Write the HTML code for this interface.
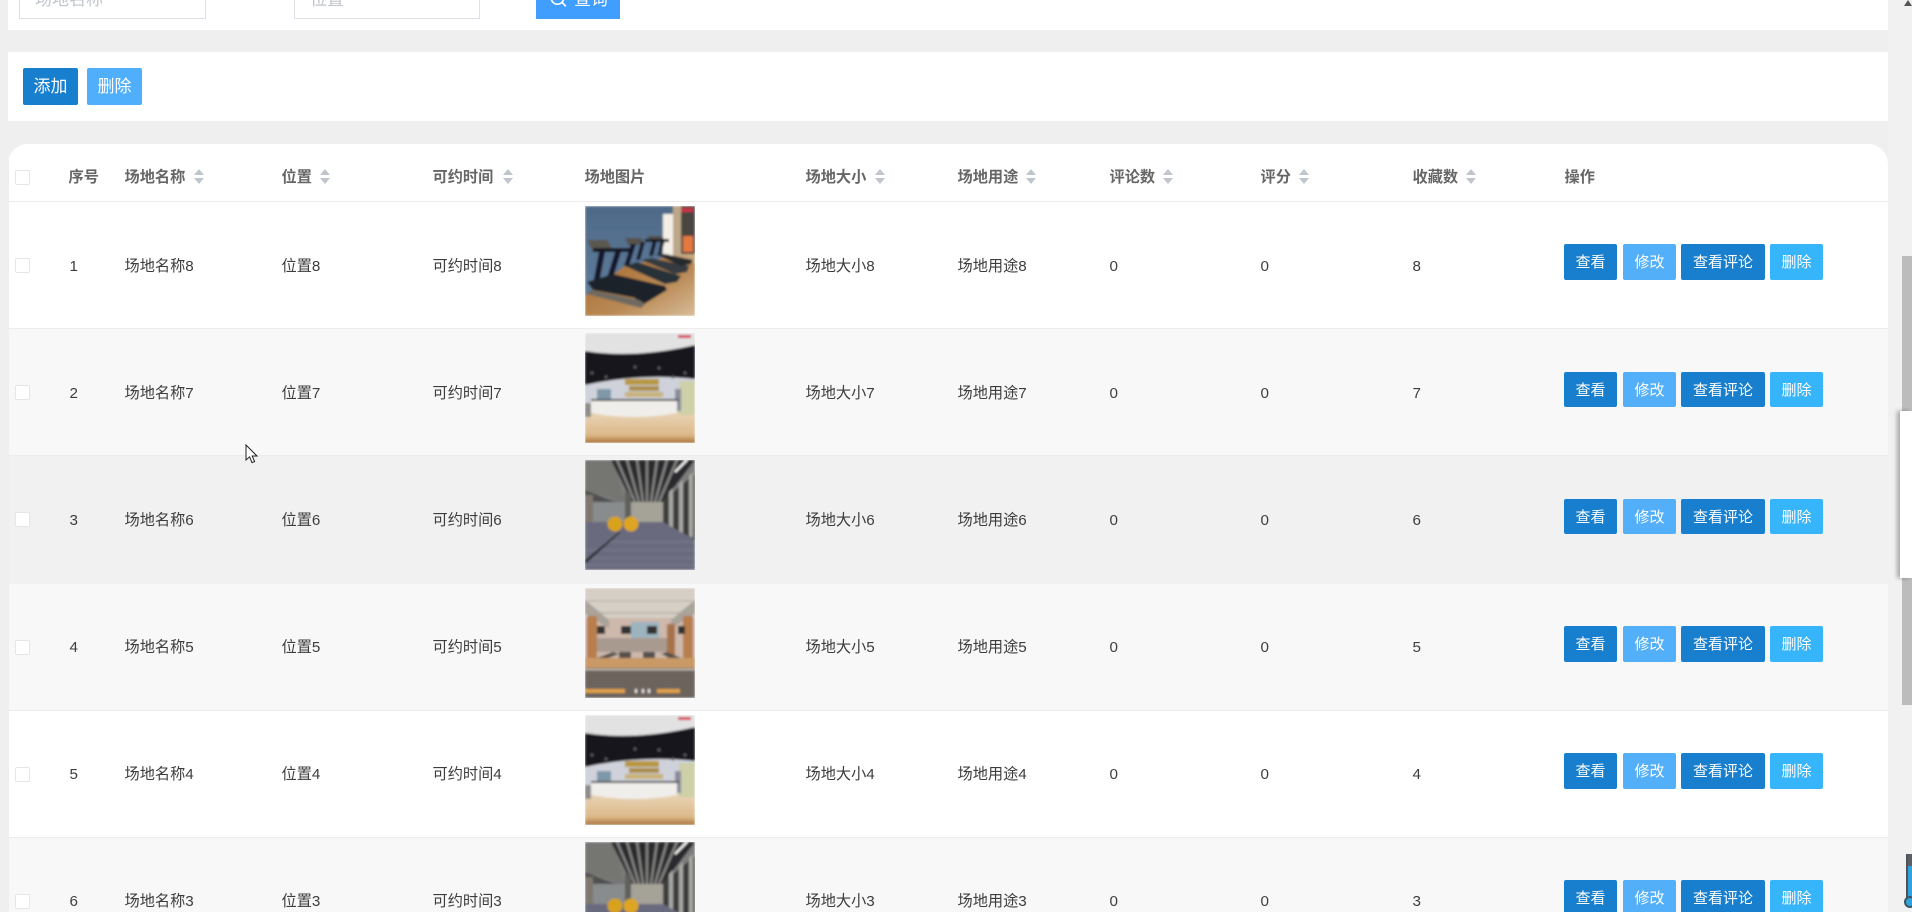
<!DOCTYPE html>
<html lang="zh">
<head>
<meta charset="utf-8">
<style>
html,body{margin:0;padding:0;width:1912px;height:912px;overflow:hidden;background:#efefef;font-family:"Liberation Sans","Noto Sans CJK SC",sans-serif;}
*{box-sizing:border-box}
.a{position:absolute}
#wrap{position:relative;width:1912px;height:912px;overflow:hidden;background:#efefef}
.panel{position:absolute;left:8px;width:1880px;background:#fff}
.input{position:absolute;height:40px;top:-21px;border:1px solid #dcdfe6;background:#fff;color:#c0c4cc;font-size:17px;line-height:39px;padding-left:15px}
.btn{position:absolute;color:#fff;text-align:center;border-radius:2px;font-size:15px;}
.blue{background:#187fcf}.lt{background:#54aff9}.cy{background:#36b5fb}
.row{position:absolute;left:8px;width:1880px;height:127px;border-bottom:1px solid #ececec;overflow:hidden}
.t{position:absolute;top:54px;height:20px;line-height:20px;font-size:15.2px;color:#3d3d3d;white-space:nowrap;margin-left:-.5px}
.r1 .t{top:55px}
.cb{position:absolute;left:7px;top:56px;width:15px;height:15px;border:1px solid #e6e6e6;border-radius:2px;background:#fff}
.row svg{position:absolute;left:577px;top:4px;width:110px;height:110px}
.row .btn{top:42px;height:36px;line-height:37px}
.r2 .btn{top:43px;height:35px}
.b1{left:1556px;width:53px}.b2{left:1615px;width:53px}.b3{left:1673px;width:84px}.b4{left:1762px;width:53px}
.h{position:absolute;top:168px;height:20px;line-height:20px;font-size:15.2px;font-weight:bold;color:#666;white-space:nowrap;margin-left:-.5px}
.s{position:absolute;top:169px;width:10px;height:15px}
</style>
</head>
<body>
<div id="wrap">
<svg width="0" height="0" style="position:absolute">
<defs>
<filter id="bl" x="0" y="0" width="100%" height="100%"><feGaussianBlur stdDeviation="1"/></filter>
<linearGradient id="fl1" x1="0" y1="0" x2="1" y2="1"><stop offset="0" stop-color="#a8682c"/><stop offset="0.6" stop-color="#b98a56"/><stop offset="1" stop-color="#d8bc98"/></linearGradient>
<linearGradient id="wall" x1="0" y1="0" x2="0" y2="1"><stop offset="0" stop-color="#4f6a88"/><stop offset="1" stop-color="#5f7c9c"/></linearGradient>
<linearGradient id="fl2" x1="0" y1="0" x2="0" y2="1"><stop offset="0" stop-color="#e6cfae"/><stop offset="0.7" stop-color="#dcb888"/><stop offset="1" stop-color="#a8713a"/></linearGradient>
<g id="imgA"><g filter="url(#bl)">
<rect width="110" height="110" fill="#c8a67e"/>
<polygon points="0,0 88,0 88,50 40,60 0,92" fill="url(#wall)"/>
<polygon points="0,90 40,60 90,50 110,58 110,110 0,110" fill="url(#fl1)"/>
<rect x="78" y="8" width="10" height="42" fill="#f4efe6"/>
<rect x="88" y="0" width="8" height="50" fill="#bca888"/>
<rect x="96" y="0" width="14" height="48" fill="#4a4540"/>
<rect x="98" y="30" width="10" height="16" fill="#e4783f"/>
<rect x="96" y="2" width="12" height="4" fill="#c9324a"/>
<polygon points="2,34 22,34 28,44 8,46" fill="#5a584f"/>
<polygon points="40,32 56,32 60,38 44,40" fill="#55534c"/>
<polygon points="62,30 76,30 80,34 66,36" fill="#4f4d47"/>
<rect x="8" y="42" width="38" height="4" fill="#151824"/>
<polygon points="14,46 20,46 14,78 8,78" fill="#14182c"/>
<polygon points="30,46 36,46 28,72 22,72" fill="#14182c"/>
<polygon points="46,38 51,38 44,60 39,60" fill="#14182c"/>
<polygon points="56,36 60,36 55,54 51,54" fill="#14182c"/>
<polygon points="68,34 72,34 68,50 64,50" fill="#14182c"/>
<polygon points="76,34 80,34 76,48 73,48" fill="#14182c"/>
<rect x="60" y="33" width="24" height="3" fill="#151824"/>
<polygon points="2,76 28,68 80,80 82,84 56,100 50,92 8,84" fill="#1a232a"/>
<polygon points="40,60 52,56 96,70 92,76 80,78" fill="#283238"/>
<polygon points="56,54 66,52 104,60 102,66 90,68" fill="#343a3f"/>
<polygon points="70,48 80,48 108,54 106,58 96,60" fill="#25292d"/>
<polygon points="6,84 54,94 60,98 56,102 2,88" fill="#6e6a60"/>
</g></g>
<g id="imgB"><g filter="url(#bl)">
<rect width="110" height="110" fill="#e6cfae"/>
<rect width="110" height="22" fill="#e2e2e2"/>
<path d="M0 18 Q50 26 110 12 L110 60 L0 60Z" fill="#17171c"/>
<rect x="93" y="2" width="13" height="3" fill="#d83a54"/>
<path d="M0 52 Q55 40 110 46 L110 72 L0 72Z" fill="#cfd2da"/>
<g fill="#5c5c5c"><circle cx="7" cy="40" r="1.5"/><circle cx="21" cy="44" r="1.5"/><circle cx="50" cy="34" r="1.5"/><circle cx="74" cy="35" r="1.5"/><circle cx="88" cy="44" r="1.5"/><circle cx="100" cy="40" r="1.5"/></g>
<rect x="12" y="56" width="14" height="10" fill="#7f98a8"/>
<rect x="40" y="46" width="34" height="6" fill="#b8983f"/>
<rect x="44" y="53" width="30" height="5" fill="#ac8e48"/>
<rect x="40" y="59" width="38" height="5" fill="#c9b27a"/>
<rect x="94" y="48" width="16" height="34" fill="#cdd0a8"/>
<rect x="90" y="56" width="6" height="22" fill="#8a8c9c"/>
<rect x="6" y="66" width="88" height="2" fill="#4c4c4e"/>
<rect x="0" y="70" width="6" height="14" fill="#8c8c88"/>
<rect y="84" width="110" height="26" fill="url(#fl2)"/>
<path d="M6 68 L92 68 L92 80 Q50 88 6 80Z" fill="#f0eeea"/>
</g></g>
<g id="imgC"><g filter="url(#bl)">
<rect width="110" height="110" fill="#6c6c7c"/>
<polygon points="0,0 110,0 110,35 78,45 40,42 0,35" fill="#7d7d7b"/>
<polygon points="0,0 28,0 40,42 0,30" fill="#757572"/>
<polygon points="26,0 110,0 78,42 48,44" fill="#2c2c2e"/>
<g stroke="#848482" stroke-width="2.4"><line x1="32" y1="0" x2="50" y2="42"/><line x1="42" y1="0" x2="54" y2="42"/><line x1="52" y1="0" x2="58" y2="42"/><line x1="62" y1="0" x2="62" y2="42"/><line x1="72" y1="0" x2="66" y2="42"/><line x1="82" y1="0" x2="70" y2="42"/><line x1="92" y1="0" x2="74" y2="42"/></g>
<line x1="90" y1="12" x2="102" y2="0" stroke="#fff" stroke-width="2"/>
<polygon points="0,30 30,42 40,45 0,50" fill="#505050"/>
<rect x="0" y="35" width="8" height="32" fill="#7d7770"/>
<rect x="8" y="42" width="32" height="26" fill="#888c8c"/>
<rect x="40" y="32" width="6" height="30" fill="#5f5f5c"/>
<rect x="46" y="42" width="32" height="20" fill="#a5a298"/>
<polygon points="78,40 110,14 110,80 78,62" fill="#3e3e3c"/>
<g fill="#a8a8a5"><polygon points="84,32 88,28 88,68 84,66"/><polygon points="94,24 98,20 98,74 94,72"/><polygon points="104,16 108,12 108,78 104,76"/></g>
<polygon points="0,62 78,62 110,80 110,110 0,110" fill="#6a6a7e"/>
<g stroke="#7c7c90" stroke-width="1"><line x1="0" y1="90" x2="110" y2="90"/><line x1="0" y1="98" x2="110" y2="98"/><line x1="20" y1="82" x2="110" y2="82"/><line x1="0" y1="105" x2="110" y2="105"/></g>
<polygon points="0,100 34,72 36,72 0,104" fill="#26262c"/>
<circle cx="30" cy="64" r="7.5" fill="#d8a21e"/>
<circle cx="46" cy="64" r="7.5" fill="#dda522"/>
</g></g>
<g id="imgD"><g filter="url(#bl)">
<rect width="110" height="110" fill="#cdb8ab"/>
<rect width="110" height="30" fill="#d6cfc6"/>
<rect y="12" width="110" height="2" fill="#c4beb3"/>
<rect y="24" width="110" height="2" fill="#bdb7ad"/>
<polygon points="0,12 24,32 24,40 0,26" fill="#a9a399"/>
<polygon points="110,12 86,32 86,40 110,26" fill="#a9a399"/>
<rect x="46" y="34" width="28" height="22" fill="#9db4bf"/>
<rect x="2" y="28" width="10" height="45" fill="#b97e4e"/>
<rect x="98" y="28" width="10" height="45" fill="#b97e4e"/>
<rect x="82" y="36" width="8" height="34" fill="#a87248"/>
<rect x="12" y="38" width="8" height="8" fill="#333"/>
<rect x="36" y="38" width="10" height="8" fill="#333"/>
<rect x="62" y="38" width="10" height="8" fill="#333"/>
<rect x="93" y="38" width="7" height="8" fill="#333"/>
<rect x="12" y="50" width="70" height="14" fill="#a99a90"/>
<rect x="34" y="64" width="12" height="8" fill="#55504c"/>
<rect x="58" y="64" width="12" height="8" fill="#55504c"/>
<polygon points="12,70 28,64 34,66 18,72" fill="#55504c"/>
<polygon points="82,64 96,70 90,72 76,66" fill="#55504c"/>
<rect y="70" width="110" height="10" fill="#c99a66"/>
<rect y="80" width="110" height="30" fill="#6c635d"/>
<rect y="81" width="110" height="1.2" fill="#d8d2c8"/>
<rect y="101" width="40" height="4" fill="#e0a14a"/>
<rect x="72" y="101" width="23" height="4" fill="#e0a14a"/>
<rect x="50" y="101" width="2" height="4" fill="#eee"/><rect x="57" y="101" width="2" height="4" fill="#eee"/><rect x="63" y="101" width="2" height="4" fill="#eee"/>
</g></g>
<g id="up"><polygon points="5,0 10,6 0,6" fill="#c0c4cc"/><polygon points="5,15 0,9 10,9" fill="#c0c4cc"/></g>
</defs>
</svg>

<!-- top panel -->
<div class="panel" style="top:0;height:30px;"></div>
<div class="input" style="left:19px;width:187px">场地名称</div>
<div class="input" style="left:294px;width:186px">位置</div>
<div class="a" style="left:536px;top:-21px;width:84px;height:40px;background:#409eff;color:#fff;font-size:17px;line-height:41px;padding-left:13px;white-space:nowrap">
<svg width="18" height="18" viewBox="0 0 16 16" style="vertical-align:-3px;margin-right:7px"><circle cx="7.5" cy="7" r="5.6" fill="none" stroke="#fff" stroke-width="1.5"/><line x1="11.5" y1="11" x2="15" y2="14.5" stroke="#fff" stroke-width="1.5"/></svg>查询</div>

<!-- action panel -->
<div class="panel" style="top:52px;height:69px"></div>
<div class="btn blue" style="left:23px;top:68px;width:55px;height:37px;line-height:37px;font-size:17px">添加</div>
<div class="btn" style="left:87px;top:68px;width:55px;height:37px;line-height:37px;font-size:17px;background:#4faffc">删除</div>

<!-- table panel -->
<div class="panel" style="top:144px;height:768px;border-radius:20px 20px 0 0"></div>
<div class="a" style="left:8px;top:201px;width:1880px;height:1px;background:#ececec"></div>
<div class="cb" style="left:15px;top:170px"></div>
<div class="h" style="left:69px">序号</div>
<div class="h" style="left:125px">场地名称</div><svg class="s" style="left:194px" viewBox="0 0 10 15"><use href="#up"/></svg>
<div class="h" style="left:282px">位置</div><svg class="s" style="left:320px" viewBox="0 0 10 15"><use href="#up"/></svg>
<div class="h" style="left:433px">可约时间</div><svg class="s" style="left:503px" viewBox="0 0 10 15"><use href="#up"/></svg>
<div class="h" style="left:585px">场地图片</div>
<div class="h" style="left:806px">场地大小</div><svg class="s" style="left:875px" viewBox="0 0 10 15"><use href="#up"/></svg>
<div class="h" style="left:958px">场地用途</div><svg class="s" style="left:1026px" viewBox="0 0 10 15"><use href="#up"/></svg>
<div class="h" style="left:1110px">评论数</div><svg class="s" style="left:1163px" viewBox="0 0 10 15"><use href="#up"/></svg>
<div class="h" style="left:1261px">评分</div><svg class="s" style="left:1299px" viewBox="0 0 10 15"><use href="#up"/></svg>
<div class="h" style="left:1413px">收藏数</div><svg class="s" style="left:1466px" viewBox="0 0 10 15"><use href="#up"/></svg>
<div class="h" style="left:1565px">操作</div>

<div class="row r1" style="top:202px;background:#fff">
<div class="cb"></div><div class="t" style="left:62px">1</div><div class="t" style="left:117px">场地名称8</div><div class="t" style="left:274px">位置8</div><div class="t" style="left:425px">可约时间8</div>
<svg viewBox="0 0 110 110"><use href="#imgA"/></svg>
<div class="t" style="left:798px">场地大小8</div><div class="t" style="left:950px">场地用途8</div><div class="t" style="left:1102px">0</div><div class="t" style="left:1253px">0</div><div class="t" style="left:1405px">8</div>
<div class="btn blue b1">查看</div><div class="btn lt b2">修改</div><div class="btn blue b3">查看评论</div><div class="btn cy b4">删除</div>
</div>

<div class="row r1 r2" style="top:329px;background:#f8f8f9">
<div class="cb"></div><div class="t" style="left:62px">2</div><div class="t" style="left:117px">场地名称7</div><div class="t" style="left:274px">位置7</div><div class="t" style="left:425px">可约时间7</div>
<svg viewBox="0 0 110 110"><use href="#imgB"/></svg>
<div class="t" style="left:798px">场地大小7</div><div class="t" style="left:950px">场地用途7</div><div class="t" style="left:1102px">0</div><div class="t" style="left:1253px">0</div><div class="t" style="left:1405px">7</div>
<div class="btn blue b1">查看</div><div class="btn lt b2">修改</div><div class="btn blue b3">查看评论</div><div class="btn cy b4">删除</div>
</div>

<div class="row r1 r2" style="top:456px;height:128px;background:#f1f1f1;border-bottom:0">
<div class="cb"></div><div class="t" style="left:62px">3</div><div class="t" style="left:117px">场地名称6</div><div class="t" style="left:274px">位置6</div><div class="t" style="left:425px">可约时间6</div>
<svg viewBox="0 0 110 110"><use href="#imgC"/></svg>
<div class="t" style="left:798px">场地大小6</div><div class="t" style="left:950px">场地用途6</div><div class="t" style="left:1102px">0</div><div class="t" style="left:1253px">0</div><div class="t" style="left:1405px">6</div>
<div class="btn blue b1">查看</div><div class="btn lt b2">修改</div><div class="btn blue b3">查看评论</div><div class="btn cy b4">删除</div>
</div>

<div class="row" style="top:584px;background:#f8f8f9">
<div class="cb"></div><div class="t" style="left:62px">4</div><div class="t" style="left:117px">场地名称5</div><div class="t" style="left:274px">位置5</div><div class="t" style="left:425px">可约时间5</div>
<svg viewBox="0 0 110 110"><use href="#imgD"/></svg>
<div class="t" style="left:798px">场地大小5</div><div class="t" style="left:950px">场地用途5</div><div class="t" style="left:1102px">0</div><div class="t" style="left:1253px">0</div><div class="t" style="left:1405px">5</div>
<div class="btn blue b1">查看</div><div class="btn lt b2">修改</div><div class="btn blue b3">查看评论</div><div class="btn cy b4">删除</div>
</div>

<div class="row" style="top:711px;background:#fff">
<div class="cb"></div><div class="t" style="left:62px">5</div><div class="t" style="left:117px">场地名称4</div><div class="t" style="left:274px">位置4</div><div class="t" style="left:425px">可约时间4</div>
<svg viewBox="0 0 110 110"><use href="#imgB"/></svg>
<div class="t" style="left:798px">场地大小4</div><div class="t" style="left:950px">场地用途4</div><div class="t" style="left:1102px">0</div><div class="t" style="left:1253px">0</div><div class="t" style="left:1405px">4</div>
<div class="btn blue b1">查看</div><div class="btn lt b2">修改</div><div class="btn blue b3">查看评论</div><div class="btn cy b4">删除</div>
</div>

<div class="row" style="top:838px;height:74px;background:#f8f8f9;border-bottom:0">
<div class="cb"></div><div class="t" style="left:62px">6</div><div class="t" style="left:117px">场地名称3</div><div class="t" style="left:274px">位置3</div><div class="t" style="left:425px">可约时间3</div>
<svg viewBox="0 0 110 110"><use href="#imgC"/></svg>
<div class="t" style="left:798px">场地大小3</div><div class="t" style="left:950px">场地用途3</div><div class="t" style="left:1102px">0</div><div class="t" style="left:1253px">0</div><div class="t" style="left:1405px">3</div>
<div class="btn blue b1">查看</div><div class="btn lt b2">修改</div><div class="btn blue b3">查看评论</div><div class="btn cy b4">删除</div>
</div>

<!-- table left gutter -->
<div class="a" style="left:8px;top:144px;width:1px;height:768px;background:#efefef"></div>

<!-- scrollbar -->
<div class="a" style="left:1888px;top:0;width:24px;height:912px;background:#f1f1f2"></div>
<div class="a" style="left:1902px;top:256px;width:10px;height:449px;background:#bcbcbc"></div>
<div class="a" style="left:1900px;top:411px;width:12px;height:167px;background:#fff;box-shadow:-3px 0 4px rgba(0,0,0,.3)"></div>
<svg class="a" style="left:1904px;top:0" width="8" height="6"><polygon points="4,0 8,6 0,6" fill="#555"/></svg>
<!-- thermometer -->
<svg class="a" style="left:1904px;top:852px" width="8" height="60" viewBox="0 0 8 60"><rect x="3" y="2" width="6" height="20" fill="#5c5f66"/><rect x="3" y="14" width="6" height="40" fill="#2ea3dc"/><rect x="2" y="2" width="2" height="44" fill="#4d5358"/><circle cx="6" cy="50" r="5" fill="#2ea3dc" stroke="#3e5661" stroke-width="2"/></svg>
<!-- cursor -->
<svg class="a" style="left:245px;top:444px" width="14" height="21" viewBox="0 0 14 21"><path d="M1 1 L1 16 L4.6 12.8 L7 18.6 L9.6 17.6 L7.2 12 L12 12 Z" fill="#fff" stroke="#222" stroke-width="1"/></svg>
</div>
</body>
</html>
